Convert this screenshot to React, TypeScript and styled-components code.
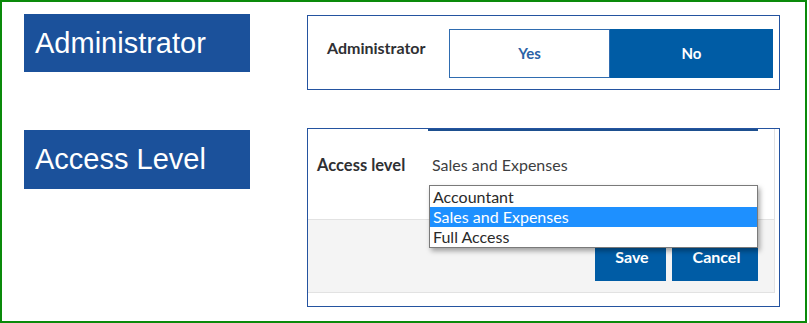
import styled, { createGlobalStyle } from "styled-components"

const GlobalStyle = createGlobalStyle`
    html, body {
        margin: 0;
        padding: 0;
        background: #fff;
    }
    * {
        box-sizing: border-box;
    }
`

const Frame = styled.div`
    width: 807px;
    height: 323px;
    border: 2px solid #0a8a0a;
    padding: 12px 0 0 22px;
    display: flex;
    flex-direction: column;
    gap: 38px;
`

const Row = styled.div`
    display: flex;
    align-items: flex-start;
    gap: 57px;
`

const Caption = styled.div<{ $top: number; $height: number }>`
    width: 226px;
    height: ${(p) => p.$height}px;
    margin-top: ${(p) => p.$top}px;
    background: #1b519b;
    color: #fff;
    font-family: "Liberation Sans", Arial, sans-serif;
    font-size: 29px;
    display: flex;
    align-items: center;
    padding-left: 11px;
`

const Panel = styled.div<{ $top: number }>`
    width: 473px;
    margin-top: ${(p) => p.$top}px;
    border: 1px solid #2453a0;
    font-family: Lato, "Open Sans", sans-serif;
    color: #393a3d;
`

const AdminBody = styled.div`
    display: flex;
    align-items: flex-start;
    padding: 13px 6px 11px 19px;
`

const FieldLabel = styled.div<{ $width: number; $top: number; $size: number }>`
    width: ${(p) => p.$width}px;
    margin-top: ${(p) => p.$top}px;
    font-size: ${(p) => p.$size}px;
    line-height: 20px;
    font-weight: 700;
    color: #2f3033;
`

const Toggle = styled.div`
    display: flex;
    height: 49px;
`

const ToggleOption = styled.div<{ $on?: boolean }>`
    width: ${(p) => (p.$on ? 163 : 161)}px;
    display: flex;
    align-items: center;
    justify-content: center;
    font-size: 15px;
    font-weight: 700;
    padding-bottom: 1px;
    background: ${(p) => (p.$on ? "#005ca5" : "#fff")};
    color: ${(p) => (p.$on ? "#fff" : "#2b62a6")};
    border: 1px solid ${(p) => (p.$on ? "#005ca5" : "#2f6cb0")};
`

const AccessBody = styled.div`
    padding: 0 4px 13px 0;
`

const Card = styled.div`
    border-right: 1px solid #e2e2e2;
    border-bottom: 1px solid #e2e2e2;
`

const CardTop = styled.div`
    height: 90px;
    display: flex;
    align-items: flex-start;
    padding-left: 9px;
`

const SelectField = styled.div`
    position: relative;
    width: 330px;
    border-top: 2px solid #1d4f8f;
    padding: 24px 0 0 4px;
    font-size: 16px;
    line-height: 20px;
    color: #3d3e41;
`

const Options = styled.ul`
    position: absolute;
    top: 54px;
    left: 1px;
    width: 329px;
    margin: 0;
    padding: 1px 0 0;
    list-style: none;
    background: #fff;
    border: 1px solid #7a7a7a;
    box-shadow: 2px 3px 5px rgba(0, 0, 0, 0.35);
    z-index: 2;
`

const Option = styled.li<{ $selected?: boolean }>`
    height: 20px;
    line-height: 20px;
    padding-left: 3px;
    font-size: 16px;
    color: ${(p) => (p.$selected ? "#fff" : "#2a2a2a")};
    background: ${(p) => (p.$selected ? "#1e90ff" : "transparent")};
`

const Footer = styled.div`
    background: #f4f4f4;
    border-top: 1px solid #e2e2e2;
    display: flex;
    justify-content: flex-end;
    gap: 6px;
    padding: 11px 16px 11px 0;
`

const Button = styled.button<{ $width: number }>`
    width: ${(p) => p.$width}px;
    height: 50px;
    border: none;
    background: #005ca5;
    color: #fff;
    font-family: Lato, "Open Sans", sans-serif;
    font-size: 16px;
    font-weight: 700;
    padding: 0 0 0 3px;
`

export default function App() {
    return (
        <>
            <GlobalStyle />
            <Frame>
                <Row>
                    <Caption $top={0} $height={58}>Administrator</Caption>
                    <Panel $top={1}>
                        <AdminBody>
                            <FieldLabel $width={122} $top={9} $size={16}>Administrator</FieldLabel>
                            <Toggle>
                                <ToggleOption>Yes</ToggleOption>
                                <ToggleOption $on>No</ToggleOption>
                            </Toggle>
                        </AdminBody>
                    </Panel>
                </Row>
                <Row>
                    <Caption $top={2} $height={59}>Access Level</Caption>
                    <Panel $top={0}>
                        <AccessBody>
                            <Card>
                                <CardTop>
                                    <FieldLabel $width={111} $top={26} $size={16.5}>Access level</FieldLabel>
                                    <SelectField>
                                        Sales and Expenses
                                        <Options>
                                            <Option>Accountant</Option>
                                            <Option $selected>Sales and Expenses</Option>
                                            <Option>Full Access</Option>
                                        </Options>
                                    </SelectField>
                                </CardTop>
                                <Footer>
                                    <Button $width={71}>Save</Button>
                                    <Button $width={86}>Cancel</Button>
                                </Footer>
                            </Card>
                        </AccessBody>
                    </Panel>
                </Row>
            </Frame>
        </>
    )
}
